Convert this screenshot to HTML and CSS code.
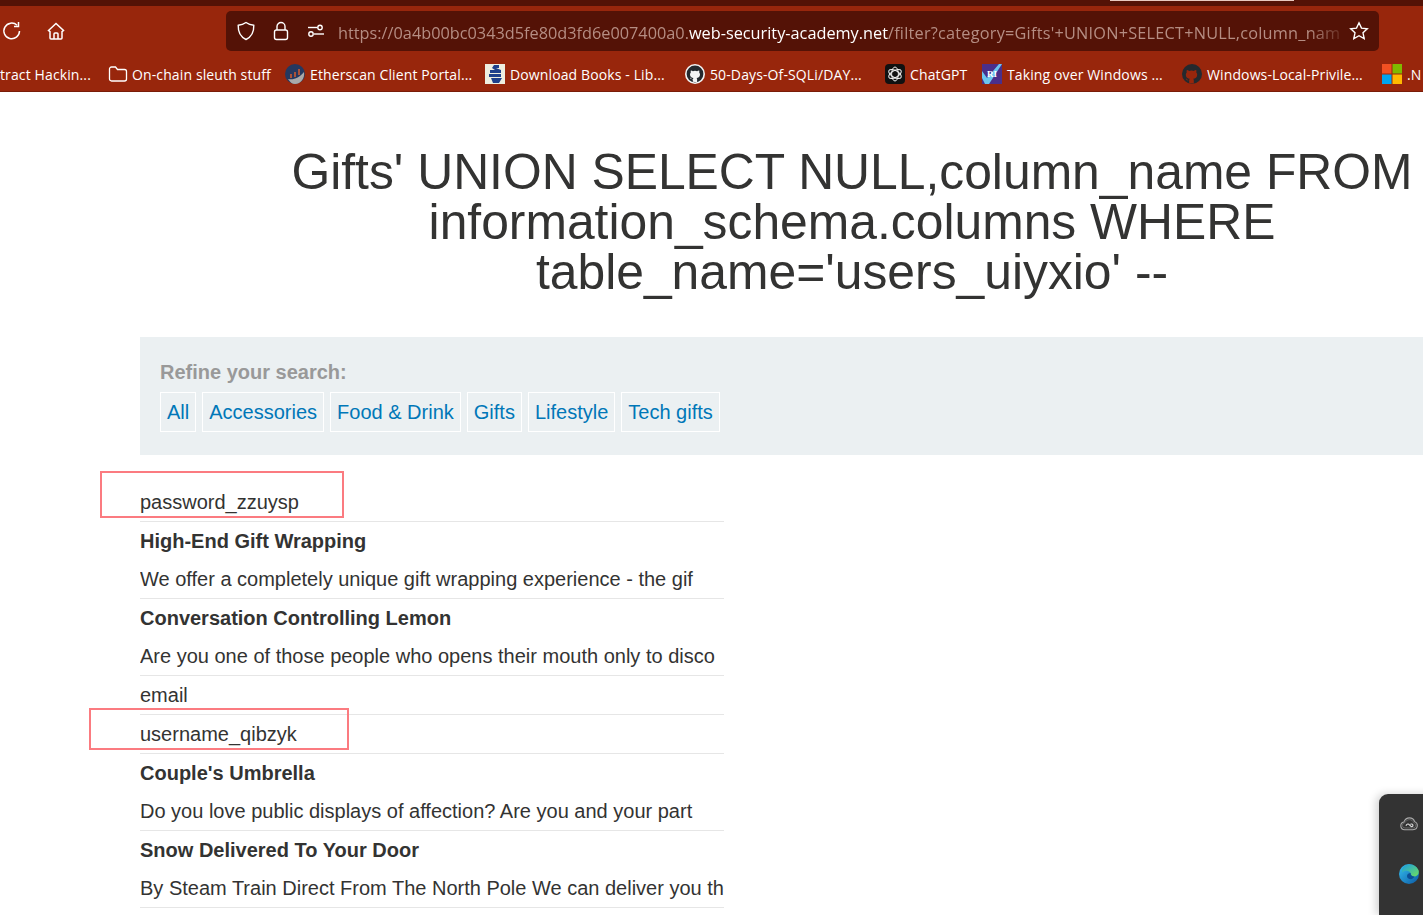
FILE: index.html
```html
<!DOCTYPE html>
<html>
<head>
  <meta charset="utf-8">
  <title>Filter</title>
  <link rel="stylesheet" href="styles.css">
</head>
<body>

  <header class="browser">
    <div class="tab-strip"><span class="active-tab"></span></div>

    <div class="toolbar">
      <svg class="tool-icon reload" viewBox="0 0 20 20"><path d="M17.500 10a7.800 7.800 0 1 1-2.400-5.700"/><path d="M16.500 1v4.500H12"/></svg>
      <svg class="tool-icon home" viewBox="0 0 20 20"><path d="M2.500 9.500 10 2.500l7.500 7-1.500 1.200V17a1 1 0 0 1-1 1H5a1 1 0 0 1-1-1v-6.300z"/><path d="M8 18v-5a1 1 0 0 1 1-1h2a1 1 0 0 1 1 1v5"/></svg>

      <div class="address-bar">
        <svg class="bar-icon" viewBox="0 0 20 20"><path d="M10 1.500c2.300 1.700 4.600 2.600 7.800 2.800.2 6.500-2 11.500-7.800 14.200C4.200 15.800 2 10.800 2.200 4.300 5.400 4.100 7.700 3.200 10 1.500z"/></svg>
        <svg class="bar-icon" viewBox="0 0 20 20"><rect x="3.500" y="9" width="13" height="9.500" rx="2"/><path d="M6 9V5.500a4 4 0 0 1 8 0V9"/></svg>
        <svg class="bar-icon" viewBox="0 0 20 20"><circle cx="14" cy="6.500" r="2.200"/><path d="M2 6.500h9.500"/><circle cx="5" cy="13" r="2.200"/><path d="M8 13h10"/></svg>
        <div class="url"><span class="dim">https://0a4b00bc0343d5fe80d3fd6e007400a0.</span><span class="host">web-security-academy.net</span><span class="dim path">/filter?category=Gifts'+UNION+SELECT+NULL,column_nam</span></div>
        <svg class="bar-icon star" viewBox="0 0 20 20"><path d="m10 1.800 2.500 5.300 5.800.7-4.300 4 1.200 5.800-5.200-2.900-5.200 2.900L6 11.800l-4.300-4 5.800-.7z"/></svg>
      </div>
    </div>

    <nav class="bookmarks">
      <a class="bookmark w-first">tract Hackin...</a>
      <a class="bookmark w-sleuth">
        <svg class="bm-icon folder" viewBox="0 0 20 20"><path d="M1.500 5a2 2 0 0 1 2-2h4l2 2.500h7a2 2 0 0 1 2 2V15a2 2 0 0 1-2 2h-13a2 2 0 0 1-2-2z"/></svg>
        On-chain sleuth stuff
      </a>
      <a class="bookmark w-ether">
        <svg class="bm-icon" viewBox="0 0 20 20"><circle cx="10" cy="10" r="10" fill="#25385f"/><path d="M3 15c6 1 11-1 16-7 1 6-3 12-9 12-3 0-5-2-7-5z" fill="#a9a9a9"/><path d="M5 10h2v4H5zM9 8h2v5H9zM13 5h2v6h-2z" fill="#a8523a"/></svg>
        Etherscan Client Portal...
      </a>
      <a class="bookmark w-books">
        <svg class="bm-icon" viewBox="0 0 20 20"><rect width="20" height="20" fill="#eeeee0"/><path d="M9 1h5v3h-3l5 2v3H5V6h5L7 4zM4 10h12v3H4zM6 14h11l-3 5H8z" fill="#1e3f8a"/></svg>
        Download Books - Lib...
      </a>
      <a class="bookmark w-sqli">
        <svg class="bm-icon" viewBox="0 0 20 20"><circle cx="10" cy="10" r="10" fill="#f4f4f4"/><circle cx="10" cy="10" r="8.400" fill="#24292e"/><path d="M7.800 17.800v-2.500c-1.800.3-2.500-.7-2.900-1.700.8.300 1.300.9 1.800 1.300.4.200 1 .2 1.300 0 0-.4.200-.8.500-1-2-.3-3.500-1.200-3.500-3.500 0-.8.300-1.500.8-2-.2-.5-.2-1.300.1-2 .8 0 1.500.4 2 .8a7 7 0 0 1 4.200 0c.5-.4 1.200-.8 2-.8.300.7.300 1.500.1 2 .5.500.8 1.200.8 2 0 2.300-1.500 3.200-3.500 3.500.4.300.6.800.6 1.400v3z" fill="#f4f4f4"/></svg>
        50-Days-Of-SQLi/DAY...
      </a>
      <a class="bookmark w-gpt">
        <svg class="bm-icon" viewBox="0 0 20 20"><rect width="20" height="20" rx="4" fill="#111"/><g fill="none" stroke="#eee" stroke-width="1"><ellipse cx="10" cy="10" rx="3.400" ry="7"/><ellipse cx="10" cy="10" rx="3.400" ry="7" transform="rotate(60 10 10)"/><ellipse cx="10" cy="10" rx="3.400" ry="7" transform="rotate(120 10 10)"/></g></svg>
        ChatGPT
      </a>
      <a class="bookmark w-windows">
        <svg class="bm-icon" viewBox="0 0 20 20"><rect width="20" height="20" fill="#4a2f8a"/><path d="M0 7l5 7L17 0h3L7 20H3L0 14z" fill="#6cc5ee"/><text class="ri" x="10" y="13">RI</text></svg>
        Taking over Windows ...
      </a>
      <a class="bookmark w-privesc">
        <svg class="bm-icon" viewBox="0 0 20 20"><circle cx="10" cy="10" r="10" fill="#24292e"/><path d="M7.200 19.600v-3.300c-2.300.5-3-.9-3.300-1.900 1 .4 1.500 1.100 2 1.500.4.300 1 .3 1.400 0 0-.5.200-.9.500-1.200-2.200-.3-4-1.300-4-4 0-.9.300-1.700.9-2.300-.2-.6-.2-1.400.1-2.300.9 0 1.700.4 2.300.9a8 8 0 0 1 4.800 0c.6-.5 1.400-.9 2.300-.9.300.9.300 1.700.1 2.300.6.600.9 1.400.9 2.300 0 2.700-1.800 3.700-4 4 .4.400.6.900.6 1.600v3.300z" fill="#98260c"/></svg>
        Windows-Local-Privile...
      </a>
      <a class="bookmark w-net">
        <svg class="bm-icon" viewBox="0 0 20 20"><rect width="9.500" height="9.500" fill="#f25022"/><rect x="10.500" width="9.500" height="9.500" fill="#7fba00"/><rect y="10.500" width="9.500" height="9.500" fill="#00a4ef"/><rect x="10.500" y="10.500" width="9.500" height="9.500" fill="#ffb900"/></svg>
        .N
      </a>
    </nav>
  </header>

  <main class="content">
    <h1 class="title">Gifts' UNION SELECT NULL,column_name FROM information_schema.columns WHERE table_name='users_uiyxio' --</h1>

    <section class="filters">
      <p class="filters-label">Refine your search:</p>
      <div class="filters-links">
        <a class="filter-link">All</a>
        <a class="filter-link">Accessories</a>
        <a class="filter-link">Food &amp; Drink</a>
        <a class="filter-link">Gifts</a>
        <a class="filter-link">Lifestyle</a>
        <a class="filter-link">Tech gifts</a>
      </div>
    </section>

    <div class="results">
      <div class="row line">password_zzuysp</div>
      <div class="row name">High-End Gift Wrapping</div>
      <div class="row line">We offer a completely unique gift wrapping experience - the gif</div>
      <div class="row name">Conversation Controlling Lemon</div>
      <div class="row line">Are you one of those people who opens their mouth only to disco</div>
      <div class="row line">email</div>
      <div class="row line">username_qibzyk</div>
      <div class="row name">Couple's Umbrella</div>
      <div class="row line">Do you love public displays of affection? Are you and your part</div>
      <div class="row name">Snow Delivered To Your Door</div>
      <div class="row line">By Steam Train Direct From The North Pole We can deliver you th</div>
    </div>
  </main>

  <!-- red marks drawn over the shot -->
  <div class="mark mark-password"></div>
  <div class="mark mark-username"></div>

  <aside class="dock">
    <svg class="dock-icon cc" viewBox="0 0 20 16"><path d="M5 14.500a4.500 4.500 0 0 1-.8-8.900C5.500 2.500 8 1 10.500 1c3 0 5 1.600 6 4.300 2 .8 3 2.200 3 4.200 0 3-2 5-5 5z" fill="none" stroke="#aaa" stroke-width="1.200"/><path d="M5.500 12.500a3 3 0 0 1-.2-6c1-2 3-3.500 5.200-3.500 2.500 0 4 1.300 4.700 3.500 1.700.5 2.500 1.500 2.500 3 0 2-1.500 3-3.200 3z" fill="none" stroke="#777" stroke-width=".8"/><path d="M6.500 10c1-2.500 3-2.500 4-1l1.500 1.500c1 1 2.500.5 2.500-1s-2-2-3-1" fill="none" stroke="#ddd" stroke-width="1.300"/></svg>
    <svg class="dock-icon edge" viewBox="0 0 20 20">
      <defs>
        <linearGradient id="edge-a" x1="0" y1="0" x2="1" y2="1"><stop offset="0" stop-color="#35c1f1"/><stop offset="1" stop-color="#0c59a4"/></linearGradient>
        <linearGradient id="edge-b" x1="0" y1="0" x2="1" y2="1"><stop offset="0" stop-color="#1b9de2"/><stop offset="1" stop-color="#6fe05b"/></linearGradient>
      </defs>
      <circle cx="10" cy="10" r="10" fill="url(#edge-a)"/>
      <path d="M3 5C6-1 16-1 19.500 6c1 3-.5 6-3.500 6.500-3 .3-4.500-1-4-3-1-3-6-4-9-1z" fill="url(#edge-b)"/>
      <path d="M8 12c0-2 2-3 3.500-3 0 2 1.500 3.500 4 3.500-1 2-3 3-5 2.500C9 14.500 8 13.500 8 12z" fill="#0b4f96"/>
    </svg>
  </aside>

</body>
</html>
```

FILE: styles.css
```css
html, body { margin: 0; height: 915px; overflow: hidden; background: #fff; }
body { position: relative; font-family: "Liberation Sans", Arial, sans-serif; color: #333332; }

/* browser chrome */
.browser { height: 92px; background: #98260c; border-bottom: 1px solid #7a1c08; box-sizing: border-box; overflow: hidden; font-family: "Open Sans", "Noto Sans", sans-serif; }
.tab-strip { height: 6px; background: #541206; }
.active-tab { display: block; width: 184px; height: 1px; margin-left: 1110px; background: #e8c9c0; }
.toolbar { display: flex; align-items: center; height: 40px; margin-top: 5px; padding-left: 2px; }
.tool-icon { width: 20px; height: 20px; fill: none; stroke: #fff; stroke-width: 1.500; flex: none; }
.reload { margin-right: 24px; }
.home { margin-right: 160px; }
.address-bar { display: flex; align-items: center; flex: none; width: 1153px; height: 40px; padding: 0 10px; box-sizing: border-box; background: #541206; border-radius: 5px; }
.bar-icon { width: 20px; height: 20px; margin-right: 15px; fill: none; stroke: #fff; stroke-width: 1.400; flex: none; }
.url { flex: 1; min-width: 0; margin-left: -3px; padding-top: 4px; overflow: hidden; white-space: nowrap; font-size: 16.3px; -webkit-mask-image: linear-gradient(to right, #000 96%, transparent); mask-image: linear-gradient(to right, #000 96%, transparent); }
.dim { color: #b58d83; }
.host { color: #fff; }
.path { letter-spacing: 0.22px; }
.star { margin: 0; }

.bookmarks { display: flex; align-items: center; height: 20px; margin-top: 13px; }
.bookmark { display: flex; align-items: center; flex: none; box-sizing: border-box; font-size: 14px; letter-spacing: 0.12px; color: #fff; white-space: nowrap; overflow: hidden; }
.bm-icon { width: 20px; height: 20px; margin-right: 5px; flex: none; }
.folder { fill: none; stroke: #fff; stroke-width: 1.300; margin-right: 4px; }
.ri { font: bold 9px "Liberation Serif", serif; fill: #fff; text-anchor: middle; }
.w-first { width: 108px; }
.w-sleuth { width: 177px; }
.w-ether { width: 200px; }
.w-books { width: 200px; }
.w-sqli { width: 200px; }
.w-gpt { width: 97px; }
.w-windows { width: 200px; }
.w-privesc { width: 200px; }
.w-net { width: 41px; }

/* page */
.content { width: 1424px; margin-left: 140px; }
.title { margin: 55px 0 40px; font-size: 49.8px; font-weight: 400; line-height: 50px; text-align: center; }
.filters { height: 118px; padding: 23px 20px 0; box-sizing: border-box; background: #ebf0f2; }
.filters-label { margin: 0 0 7px; font-size: 20px; font-weight: 700; line-height: 25px; color: #999; }
.filters-links { display: flex; gap: 6px; }
.filter-link { height: 40px; padding: 0 6px; box-sizing: border-box; border: 1px solid #fff; font-size: 20px; line-height: 38px; color: #0077b8; }

.results { width: 584px; margin-top: 28px; }
.row { height: 38px; font-size: 20px; line-height: 38px; white-space: nowrap; overflow: hidden; }
.name { font-weight: 700; }
.line { height: 39px; border-bottom: 1px solid #e6e6e6; box-sizing: border-box; }

.mark { position: absolute; border: 2px solid #fb7b80; box-sizing: border-box; }
.mark-password { left: 100px; top: 471px; width: 244px; height: 47px; }
.mark-username { left: 89px; top: 708px; width: 260px; height: 42px; }

.dock { position: absolute; left: 1379px; top: 794px; width: 60px; height: 121px; display: flex; flex-direction: column; align-items: center; box-sizing: border-box; padding-top: 23px; gap: 33px; background: #333; border-radius: 9px 0 0 0; box-shadow: -3px 0 8px rgba(0, 0, 0, 0.18); }
.dock-icon { width: 20px; height: 20px; flex: none; }
.cc { height: 14px; }
```
